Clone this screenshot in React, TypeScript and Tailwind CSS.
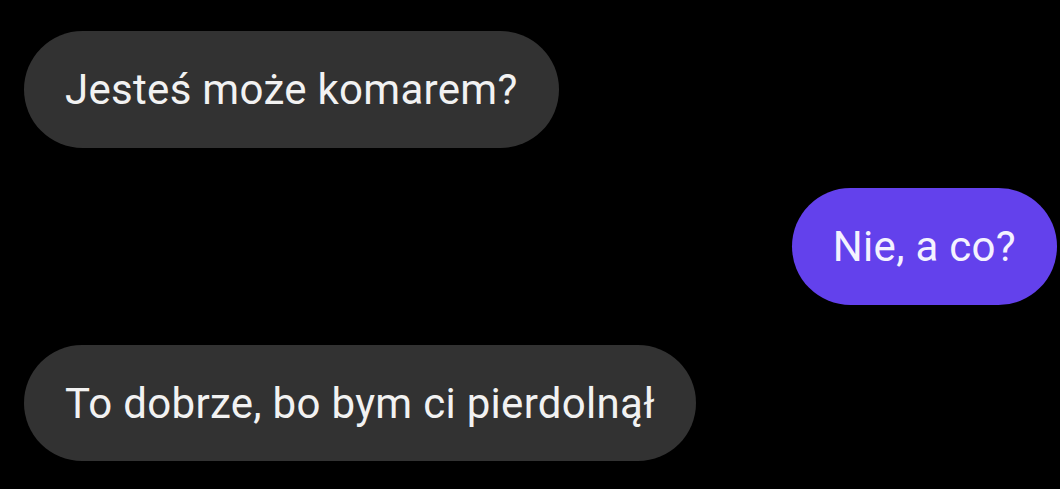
export default function App() {
  return (
    <div className="w-[1060px] h-[489px] bg-black overflow-hidden flex flex-col gap-[40px] pt-[31px] pl-[24px] pr-[3px] font-['Roboto',sans-serif]">
      {/* wiadomość przychodząca */}
      <div className="self-start h-[117px] flex items-center px-[41px] rounded-full bg-[#323232] text-[#f2f2f2] text-[42px] tracking-[0.3px]">
        Jesteś może komarem?
      </div>

      {/* moja wiadomość */}
      <div className="self-end h-[117px] flex items-center px-[41px] rounded-full bg-[#6341ec] text-[#f4f2ff] text-[42px] tracking-[0.3px]">
        Nie, a co?
      </div>

      <div className="self-start h-[116px] flex items-center px-[41px] rounded-full bg-[#323232] text-[#f2f2f2] text-[42px] tracking-[0.3px]">
        To dobrze, bo bym ci pierdolnął
      </div>
    </div>
  );
}
